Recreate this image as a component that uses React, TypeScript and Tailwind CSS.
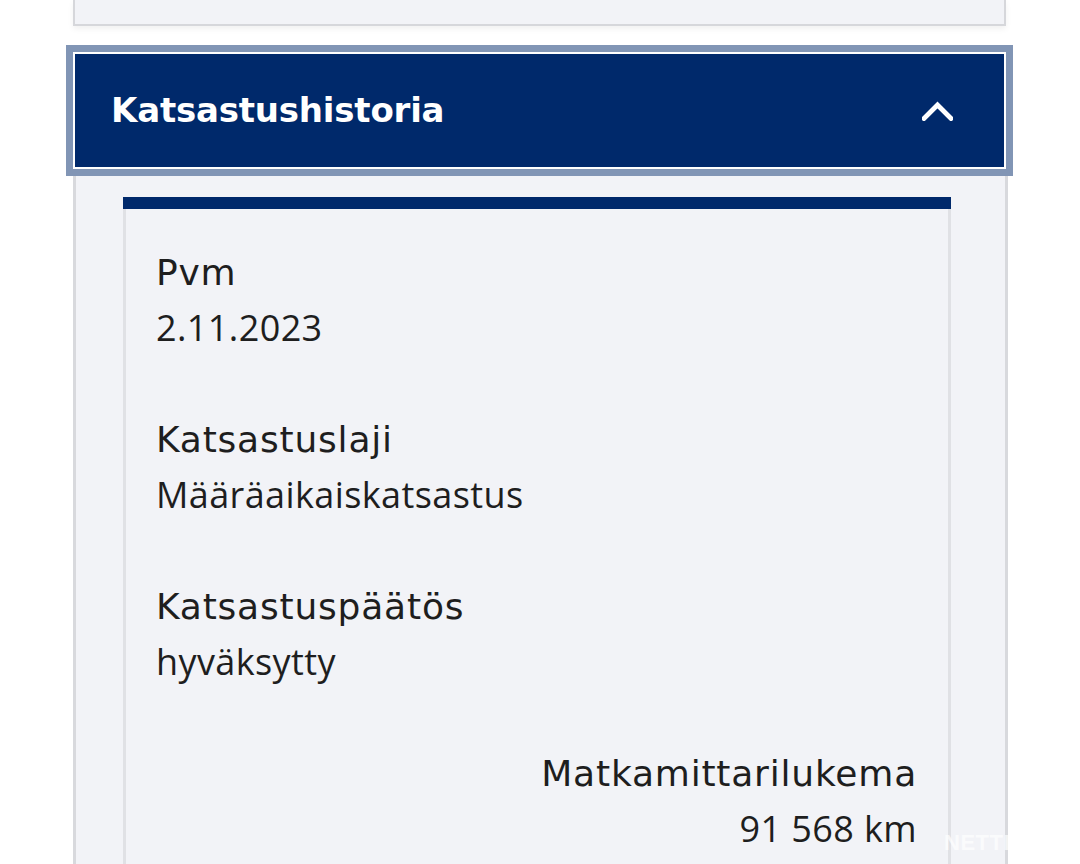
import React from 'react'

const rows = [
  { label: 'Pvm', value: '2.11.2023' },
  { label: 'Katsastuslaji', value: 'Määräaikaiskatsastus' },
  { label: 'Katsastuspäätös', value: 'hyväksytty' },
]

function Field({ label, value, right }: { label: string; value: string; right?: boolean }) {
  return (
    <div className={right ? 'flex flex-col items-end text-right' : 'flex flex-col'}>
      <div className="text-[36px] leading-[55px] text-[#1e1e1e] font-['DejaVu_Sans',sans-serif] tracking-[0.8px]">
        {label}
      </div>
      <div className="text-[36px] leading-[55px] text-[#1e1e1e] font-['Open_Sans',sans-serif] tracking-[0.4px]">
        {value}
      </div>
    </div>
  )
}

export default function App() {
  return (
    <div className="relative h-[864px] w-[1080px] overflow-hidden bg-white">
      <div className="ml-[73px] flex flex-col">
        {/* previous section, cut off at the top */}
        <div className="h-[26px] w-[933px] border-x-2 border-b-2 border-[#d6d7db] bg-[#f2f3f7] shadow-[0_3px_6px_rgba(0,0,0,0.06)]" />

        {/* accordion header */}
        <div className="relative z-10 mt-[26px] flex h-[117px] w-[933px] items-center justify-between border-2 border-white bg-[#00296b] pl-[36px] pr-[51px] shadow-[0_0_0_7px_#8195b5]">
          <h2 className="font-['DejaVu_Sans',sans-serif] text-[34px] font-bold tracking-[-0.2px] text-white">
            Katsastushistoria
          </h2>
          <svg width="31" height="20" viewBox="0 0 31 20" fill="none">
            <polyline
              points="2,17.5 15.5,4 29,17.5"
              stroke="white"
              strokeWidth="4.8"
              strokeLinecap="square"
              strokeLinejoin="miter"
            />
          </svg>
        </div>

        {/* accordion body */}
        <div className="w-[935px] border-x-[3px] border-[#d8d9dd] bg-[#f2f3f7] pt-[28px] pl-[47px]">
          <div className="w-[828px]">
            <div className="h-[12px] bg-[#00296b]" />
            <div className="border-x-[3px] border-[#e0e1e5] pl-[30px] pr-[31px] pt-[36px] pb-10">
              <div className="flex flex-col gap-[57px]">
                {rows.map((r) => (
                  <Field key={r.label} label={r.label} value={r.value} />
                ))}
                <Field label="Matkamittarilukema" value="91 568 km" right />
              </div>
            </div>
          </div>
        </div>
      </div>

      <div className="absolute left-[944px] top-[826px] font-['Liberation_Sans',sans-serif] text-[22px] font-bold tracking-[0.5px] text-white/70">
        NETTI
      </div>
    </div>
  )
}
